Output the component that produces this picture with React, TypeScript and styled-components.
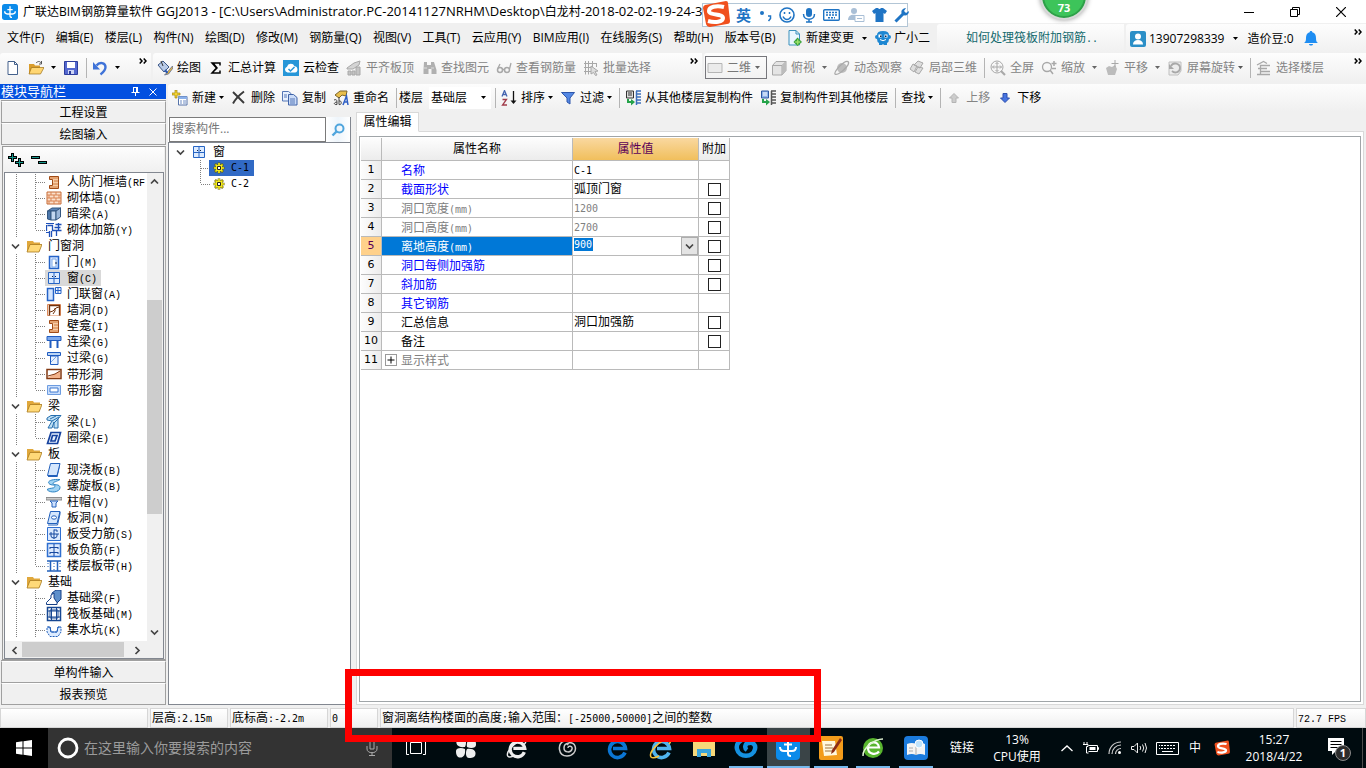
import React from "react";
import styled, { createGlobalStyle, css } from "styled-components";

const ui = `"Open Sans", "Noto Sans CJK SC", sans-serif`;

const Global = createGlobalStyle`
  * { box-sizing: border-box; }
  html, body { margin: 0; height: 100%; }
  body { background: #f0f0f0; color: #000; font: 12px/16px ${ui}; overflow: hidden; }
  button, input, select { font: inherit; color: inherit; margin: 0; padding: 0; border: 0; background: none; border-radius: 0; outline: 0; }
  button { cursor: pointer; white-space: nowrap; }
  svg { display: block; flex: none; }
`;

/* ---------- icons ---------- */

const Svg = ({ w = 16, h = 16, vb, children }: { w?: number; h?: number; vb?: string; children: React.ReactNode }) => (
  <svg width={w} height={h} viewBox={vb ?? `0 0 ${w} ${h}`} fill="none" aria-hidden="true">
    {children}
  </svg>
);

const Arrow = ({ color = "#000" }: { color?: string }) => (
  <Svg w={5} h={3}><path d="M0 0h5L2.500 3z" fill={color} /></Svg>
);

const More = () => (
  <Svg w={8} h={6}><path d="M.7.5 3 3 .7 5.500M4.700.5 7 3 4.700 5.500" stroke="#000" strokeWidth="1.500" /></Svg>
);

const AppMark = ({ size = 16 }: { size?: number }) => (
  <Svg w={size} h={size} vb="0 0 24 24">
    <rect width="24" height="24" rx="4" fill="#0c8bea" />
    <path d="M12 3.500v14q0 2.500 3 2.500M8 8.500h8M4 11q0 4 4 4h8q4 0 4-4" stroke="#fff" strokeWidth="2" />
  </Svg>
);

const g = "#a8a8a8";
const icons: Record<string, React.ReactNode> = {
  file: <><path d="M3 1.500h6.500l3 3v10H3z" fill="#fff" stroke="#44618c" /><path d="M9.500 1.500v3h3" stroke="#44618c" /></>,
  open: <><path d="M1 4h5l1 1.500h5V14H1z" fill="#d99c2b" /><path d="M3.500 7.500H16L12.500 14H1z" fill="#ffd672" stroke="#9c7018" strokeWidth=".7" /><path d="M8 3c2-2 4-2 5 0m.5-2v3H11" stroke="#555" /></>,
  save: <><path d="M1.500 1.500h13v13h-13z" fill="#5468cf" stroke="#2d3d9c" /><path d="M4 2h8v6H4z" fill="#fff" /><path d="M5 10h6v4H5z" fill="#cdd5f5" /><path d="M6 11h2v3H6z" fill="#2d3d9c" /></>,
  undo: <><path d="M4.500 5.500c3-4 9-3 9 1.500 0 3.500-2 5-5 7.500" stroke="#3f73d8" strokeWidth="2.400" /><path d="M1 2v7.500h7z" fill="#3f73d8" /></>,
  paint: <><path d="M1 5l5-4 6 6-5 5z" fill="#b9cbe8" stroke="#3d5887" /><path d="M4 1l2 5" stroke="#333" /><path d="M15.500 6 10 12.500 7.500 15l4-1L16 8z" fill="#e9b83d" stroke="#5b6b95" strokeWidth=".8" /><path d="M8 10l2.500 3" stroke="#2c59b4" strokeWidth="2" /></>,
  sigma: <path d="M12 5.500V3H4l4.500 5L4 13h8v-2.500M5 3l4 5-4.500 4.500" stroke="#000" strokeWidth="1.500" />,
  cloud: <><rect width="16" height="16" fill="#2696d8" /><path d="M4.500 12.500a3 3 0 0 1-.5-5.800 4 4 0 0 1 7.500-.5 3.200 3.200 0 0 1 .5 6.300z" fill="#fff" /><path d="M5.500 9 7.500 11l4-4" stroke="#2696d8" strokeWidth="1.500" /></>,
  level: <><path d="M1 8 8 3l6-2-1 4-6 4H1z" fill="#d4d4d4" stroke={g} /><path d="M2 15v-4h3v4zm4 0v-4h3v4zm4 0V7h4v8z" fill="#c4c4c4" stroke={g} /></>,
  binoc: <><path d="M3 2h3v3h4V2h3l2.500 8v4h-5V9h-3v5h-5v-4z" fill="#b0b0b0" /><path d="M3 8h3m4 0h3" stroke="#ddd" /></>,
  glasses: <><circle cx="4" cy="10" r="2.500" stroke={g} strokeWidth="1.500" /><circle cx="11" cy="10" r="2.500" stroke={g} strokeWidth="1.500" /><path d="M6.500 9.500h2M2 8l2-4M13.500 9l1.500-6" stroke={g} strokeWidth="1.300" /></>,
  batch: <><path d="M2.500 1v13.500M5.500 1v13.500M9.500 1v6M13.500 3v4M1 3.500h13M1 7.500h8M1 11.500h7" stroke={g} /><path d="M8 6l7 5-3 .5 2 3.500-1.500.5-2-3L8 14z" fill="#ddd" stroke={g} /></>,
  rect: <path d="M1 3.500h14v9H1z" fill="#ebebeb" stroke="#b5b5b5" />,
  cube: <><path d="M1.500 5.500 5 1.500h10v9L11 15H1.500z" fill="#e4e4e4" stroke={g} /><path d="M1.500 5.500H11V15M11 5.500l4-4" stroke={g} /><path d="M11 5.500l4-4v9L11 15z" fill="#bcbcbc" /></>,
  orbit: <><circle cx="8" cy="8" r="5" fill="#bdbdbd" /><path d="M1 14c-1-2 4-8 9-11.500 5-3 6 .5 2.500 4.500S3 16 1 14z" stroke="#aaa" strokeWidth="1.300" /></>,
  local: <path d="m1 9 3-5 4 2-3 6zM5 5l4-4 5 2-3 5zM6 12l3-5 5 1-4 6z" fill="#dedede" stroke={g} />,
  full: <><circle cx="7" cy="7" r="6" stroke={g} /><path d="M7 2.500v9M2.500 7h9M5.500 4 7 2.500 8.500 4m-3 6L7 11.500 8.500 10M4 5.500 2.500 7 4 8.500m6-3L11.500 7 10 8.500" stroke={g} /><path d="m11 11 4 4" stroke={g} strokeWidth="2.200" /></>,
  zoom: <><circle cx="6" cy="7" r="4.500" stroke={g} strokeWidth="1.300" /><path d="m9 10 3 4M13 1v5M10.500 3.500h5M11 8.500h4" stroke={g} strokeWidth="1.500" /></>,
  pan: <><path d="M2 8 5 6l3 1 3-2 2 4-2 6H4z" fill="#bcbcbc" /><path d="M11 0v7M7.500 3.500h7" stroke={g} /></>,
  rotate: <><path d="M2 2h12v9l-3 4H2z" fill="#ececec" stroke="#c0c0c0" /><path d="M4 6c2-4 9-3 9 2 0 4-5 6-8 3" stroke={g} strokeWidth="1.800" /><path d="M2 4v5h5z" fill={g} /></>,
  floor: <path d="M1 5 7.500 1.500 11 3.500M4 5.500h10M2 8.500h9M4 11.500h10M1 14.500h13M4.500 5v10" stroke={g} strokeWidth="1.300" />,
  create: <><path d="M6.500 6.500h8.500v8.500H6.500z" fill="#fff" stroke="#5673a9" /><path d="M6.500 6.500h8.500v2.500H6.500z" fill="#8ab0ea" /><path d="M8 11h2m1 0h3m-6 2h2m1 0h3" stroke="#6f8dc5" /><path d="M3 0h2v3h3v2H5v3H3V5H0V3h3z" fill="#f4d432" stroke="#9e8310" strokeWidth=".7" /></>,
  del: <path d="m2 2 11 11M13 1.500C9 4.500 5 8 2 13.500" stroke="#3b3b3b" strokeWidth="1.900" />,
  copy: <><path d="M.5 1.500h6l2.500 2V11H.5z" fill="#e8f1ff" stroke="#5577b6" /><path d="M2 5h3M2 7h3" stroke="#5577b6" /><path d="M6.500 4.500h5l3.500 3v7.500H6.500z" fill="#cbdcf8" stroke="#3f63a8" /><path d="M8 9h5m-5 2h5m-5 2h5" stroke="#5577b6" /></>,
  rename: <><path d="M2 5 7 1h7l-1 5-4-1-3 3z" fill="#e9bf4c" stroke="#7b642c" /><path d="M1 10c3-1 3 0 3 4.500-3 .5-4-2 0-2.500M6 7v7.500c3 1 3-4.500 0-3.500" stroke="#444" /><path d="m10 15 3.500-9L15 15m-4-3h4" stroke="#2f5fc4" strokeWidth="1.500" /></>,
  sort: <><path d="M1 6.500 3.500.5 6 6.500M2 4.500h3" stroke="#4565b0" strokeWidth="1.300" /><path d="M1.500 9.500h4L1.500 15h4.500" stroke="#a13c4b" strokeWidth="1.300" /><path d="M12.500 1v11" stroke="#111" strokeWidth="1.300" /><path d="M9.500 10.500h6l-3 3.500z" fill="#111" /></>,
  filter: <path d="M1.500 2.500h13L10 8v6l-3-2V8z" fill="#5488e4" stroke="#2e56ab" />,
  fromFloor: <><path d="M1.500 1h7v7h-7z" fill="#ddd" stroke="#333" /><path d="M3 3h4M3 5h4" stroke="#333" /><path d="M11 1h5M11 4h5M11 7h5M11 10h5M11 13h5M11.500 1v14" stroke="#3d70bc" strokeWidth="1.500" /><path d="M2 9v4h4v2.500l4-3.500-4-3v2H4V9z" fill="#25a34a" /></>,
  toFloor: <><path d="M1.500 1h7v7h-7z" fill="#8fb3ea" stroke="#2d57a0" /><path d="M3 3h4M3 5h4" stroke="#fff" /><path d="M11 1h5M11 4h5M11 7h5M11 10h5M11 13h5M11.500 1v14" stroke="#555" strokeWidth="1.500" /><path d="M2 9v4h4v2.500l4-3.500-4-3v2H4V9z" fill="#25a34a" /></>,
  up: <path d="m8 3.500 4.500 4.500H10v4.500H6V8H3.500z" fill="#ccc" stroke="#b4b4b4" />,
  down: <path d="M8 12.500 3.500 8H6V3.500h4V8h2.500z" fill="#4774e0" stroke="#2d4fae" />,
  change: <><path d="M2 .500h7L12.500 4v11H2z" fill="#eaf7ff" stroke="#3b91bd" /><path d="M9 .5V4h3.500" stroke="#3b91bd" /><path d="M10.500 7.500 15 12l-4.500 4L6.500 12z" fill="#37a03b" /><path d="M10.700 9.500v5M8.200 12h5" stroke="#9be06b" strokeWidth="1.500" /></>,
  mascot: <><path d="M2 5q0-4 6-4t6 4q2 0 2 2t-2 2q0 3-2 4v2H9l-1-1-1 1H4v-2q-2-1-2-4-2 0-2-2t2-2z" fill="#1d87d2" /><path d="M3.500 4.500h3v3h-3zM9.500 4.500h3v3h-3z" fill="#fff" /><path d="M5 5.500h1.500V7H5zM10 5.500h1.500V7H10z" fill="#124" /><path d="M5 9.500q3 2.500 6 0" stroke="#fff" /></>,
  user: <><rect width="16" height="16" rx="2" fill="#2b8fc7" /><circle cx="8" cy="5.500" r="3" fill="#fff" /><path d="M3 13.500c0-3 2-4.500 5-4.500s5 1.500 5 4.500z" fill="#fff" /></>,
  bell: <path d="M8 0c1 0 1.300.6 1.300 1.300C12 2 13 4 13 7c0 3 .5 4 2 5H1c1.500-1 2-2 2-5 0-3 1-5 3.700-5.700C6.700.6 7 0 8 0zM6 13h4c0 2-4 2-4 0z" fill="#1e8df2" />,
  folder: <><path d="M1 3h6l1 1.500h6V13H1z" fill="#e0a83c" /><path d="M4 6.500h12L13 14H1z" fill="#ffd978" stroke="#a87a1f" strokeWidth=".8" /></>,
  gear: <><path d="M8 2.500v11M2.500 8h11M4 4l8 8M12 4l-8 8" stroke="#6b6600" strokeWidth="2.600" /><path d="M8 3v10M3 8h10M4.500 4.500l7 7M11.500 4.500l-7 7" stroke="#f6ec1b" strokeWidth="1.600" /><circle cx="8" cy="8" r="3.300" fill="#f6ec1b" /><path d="M6.500 6.500h3v3h-3z" fill="#fff" stroke="#222" /></>,
  window: <><path d="M2.500 2.500h11v11h-11z" fill="#dcebff" stroke="#2765c4" /><path d="M8 2v12M2 8.500h12" stroke="#2765c4" /><path d="M6.500 6v1m3-1v1" stroke="#124" /></>,
  lintelWall: <><path d="M3.500 2.500h9v12h-9v-3h3v-6h-3z" fill="#f7cda6" stroke="#a14b16" /><path d="M4 4h8M8 7h4M7 10h5M4 13h8" stroke="#d07a3e" /></>,
  brick: <><path d="M1 2h14v12H1z" fill="#fbe0cc" stroke="#c66a35" /><path d="M1 5h14M1 8h14M1 11h14M5 2v3m5-3v3M3 5v3m5-3v3m5-3v3M5 8v3m5-3v3M3 11v3m5-3v3m5-3v3" stroke="#d98353" /></>,
  hiddenBeam: <><path d="M1.500 5 6 2h9l-4 3z" fill="#5b84b8" stroke="#33567f" /><path d="M1.500 5H5v9l-3.500-1z" fill="#4d78ac" stroke="#33567f" /><path d="M5 5h5v9H5z" fill="#c4d8f0" stroke="#33567f" /><path d="M10 5l4.500-3v9L10 14z" fill="#9bb7d9" stroke="#33567f" /></>,
  masonry: <><path d="M1.500 3.500h5v5h9M.5 3v6M5.500 9v6M9.500 2.500h6M8.500 5.500h6M3.500 9v6M10.500 9v5M12.500 1v8" stroke="#1e50b8" strokeWidth="1.300" /><path d="M0 1.500h8M0 10.500h4" stroke="#1e50b8" /></>,
  door: <><path d="M3.500 2.500h9v12h-9z" fill="#d3e5ff" stroke="#2563c8" strokeWidth="1.500" /><path d="M6 5h4v8H6z" fill="#fff" stroke="#7fa9e8" /><path d="M10 8v2" stroke="#124" /></>,
  doorWindow: <><path d="M1.500 2.500h6v12h-6z" fill="#d3e5ff" stroke="#2563c8" strokeWidth="1.500" /><path d="M9.500 1.500H15v6H9.500zM12 1v6M9 4.500h6" fill="#eef5ff" stroke="#2563c8" /></>,
  hole: <><path d="M1.500 2.500h13v11h-13z" fill="#fce6d6" stroke="#dd8a5a" /><path d="M3.500 13.500v-10h10v10" fill="#fff" stroke="#70330e" strokeWidth="1.300" /><path d="m4 10 3-1 3-3 3-1M9 6v3l-2 3" stroke="#70330e" /></>,
  linkBeam: <><path d="M1 2.500h14v4H1z" fill="#7da9ec" stroke="#205cc0" /><path d="M4.500 7v7m7-7v7" stroke="#205cc0" strokeWidth="2" /></>,
  overBeam: <><path d="M1.500 2.500h13v3h-13z" fill="#bdd6f6" stroke="#205cc0" /><path d="M4.500 6h7.500v8.500H4.500z" fill="#e9f2ff" stroke="#205cc0" /><path d="m5 12 5-5" stroke="#7ca7e5" /></>,
  stripHole: <><path d="M1 3.500h14v9H1z" fill="#fff" stroke="#823811" strokeWidth="1.500" /><path d="M2 11.500 14 5v7H2z" fill="#f2b28a" /><path d="m2 10 7-2 5-3" stroke="#823811" /></>,
  stripWindow: <><path d="M1.500 3.500h13v9h-13z" fill="#c9defc" stroke="#6d9ce0" /><path d="M4 6h8v4H4z" fill="#fff" stroke="#3e79cf" /></>,
  beam: <><path d="M1 4 5 1.500h10L12 5v9H8V8L6 14H2l4-7-5-1z" fill="#bfe0f5" stroke="#266eae" /><path d="m4 5 6-3M6 7l7-4M8 9l4-4" stroke="#266eae" /></>,
  ringBeam: <path d="M5 2.500h9.500l-3 11H1.500zM6.500 5.500h4.500L9 11H5z" fill="#eaf3ff" stroke="#16429e" strokeWidth="1.700" />,
  slab: <><path d="M4.500 1.500H14L11 13.500H1.500z" fill="#d5e7fd" stroke="#2260bb" /><path d="M14 2v2l-2.500 11H2v-1.500h9z" fill="#2260bb" /></>,
  spiral: <path d="M14 1.500C6 1 1 3 3 5.500s7 .5 6 3-5 1-8 3c3 4 13 3 13-2 0-4-7-2-7-4 0-1.500 4-2 7-4z" fill="#9fd3f4" stroke="#2d83c3" />,
  cap: <><path d="M0 3.500h16v2.500H0z" fill="#ccc" stroke="#777" strokeWidth=".8" /><path d="M4 7h8l-2 2v4H6V9z" fill="#cfe2ff" stroke="#2260bb" /></>,
  slabHole: <><path d="M4.500 1.500H14L11 13.500H1.500z" fill="#d5e7fd" stroke="#2260bb" /><path d="M14 2v2l-2.500 11H2" stroke="#2260bb" /><ellipse cx="8" cy="7.500" rx="2.500" ry="1.700" fill="#fff" stroke="#2260bb" /></>,
  forceBar: <><path d="M1.500 1.500h13v13h-13z" fill="#dceaff" stroke="#2f6fd0" /><path d="M3 8h10M8 3.500V13M5 6v4q0 2 3 2M8 4h3v2M11 8v2q0 2-3 2" stroke="#1648a0" /></>,
  negBar: <><path d="M1.500 1.500h13v13h-13z" fill="#dceaff" stroke="#2f6fd0" strokeWidth="1.500" /><path d="M8 2v12M4 5.500h8M4 10.500h8M4 5v2m8-2v2m-8 3v2m8-2v2" stroke="#1648a0" /></>,
  band: <><path d="M1 3h14M1 13h14M4.500 3v10m7-10v10" stroke="#2260bb" strokeWidth="1.500" /><path d="M8 5v1m0 2v1m0 2v1M2 5v1m0 2v1m12-4v1m0 2v1" stroke="#2260bb" /></>,
  footBeam: <><path d="M6 6V3l4-3h5v9l-4 4z" fill="#5d8fcb" stroke="#153f86" /><path d="M.5 14.500v-2L5 8V5l3-2v5l3 4.500v2z" fill="#fff" stroke="#153f86" /></>,
  raft: <><path d="M1.500 1.500h13v13h-13z" fill="#fff" stroke="#174792" strokeWidth="1.500" /><path d="M4 4h8v8H4zM1 5h14M1 11h14M5.500 1v14M10.500 1v14" stroke="#174792" /></>,
  pit: <><path d="M1 5h3l1 5h6l1-5h3v5l-3 4.500H4L1 10z" fill="#dcebff" stroke="#2260bb" strokeDasharray="2 1" /><path d="M2 5h2l1 5h6l1-5h2" stroke="#2260bb" /></>,
};

const Icon = ({ name, size = 16 }: { name: string; size?: number }) => (
  <Svg w={size} h={size} vb="0 0 16 16">{icons[name]}</Svg>
);

/* ---------- mixed text: latin runs take half the width of a Chinese character ---------- */

const Half = styled.span`font-family: "DejaVu Sans Mono", monospace; font-size: 10px;`;
const Serif = styled.span`font-family: "Liberation Mono", monospace; font-size: 10px;`;

const Mix = ({ children, serif }: { children: string; serif?: boolean }) => {
  const Run = serif ? Serif : Half;
  return (
    <span>
      {children.split(/([\x20-\x7e]+)/).map((part, i) => (i % 2 ? <Run key={i}>{part}</Run> : part))}
    </span>
  );
};

/* ---------- shell ---------- */

const Shell = styled.div`position: relative; display: flex; flex-direction: column; height: 100vh; min-height: 480px; overflow: hidden;`;

const TitleBar = styled.header`
  display: flex; align-items: center; height: 23px; flex: none; padding: 0 2px; gap: 5px; background: #fff; white-space: nowrap;
`;
const TitleText = styled.h1`margin: 0; font-size: 12px; font-weight: 400; line-height: 22px; flex: 1; overflow: hidden;`;
const TitlePath = styled.span`font-size: 13px;`;
const Caption = styled.div`display: flex;`;
const CaptionButton = styled.button`display: grid; place-items: center; width: 46px; height: 20px;`;

const ImeBar = styled.div`
  position: absolute; top: 3px; left: 702px; width: 206px; height: 24px; display: flex; align-items: center;
  gap: 7px; padding: 0 4px 0 33px; background: #fff; border: 1px solid #b3c6d6; color: #1f74c4; font: 700 15px/20px "Noto Sans CJK SC", sans-serif;
`;
const ImeLogo = styled.div`position: absolute; left: -1px; top: -4px;`;
const Ball = styled.div`
  position: absolute; top: -28px; right: 278px; width: 48px; height: 48px; border-radius: 50%; border: 2px solid #d8d8d8;
  background: #3dc45a; box-shadow: 0 0 5px #999, inset 0 0 0 2px #2f9f49; color: #fff; font: 700 11px/12px "Open Sans", sans-serif;
  display: flex; align-items: flex-end; justify-content: center; padding-bottom: 4px;
`;

const MenuRow = styled.div`display: flex; height: 30px; flex: none; white-space: nowrap;`;
const Menus = styled.nav`display: flex; align-items: center; justify-content: space-between; flex: 0 0 937px; padding: 0 7px;`;
const MenuButton = styled.button`display: flex; align-items: center; gap: 3px;`;
const MenuTail = styled.span`display: flex; align-items: center; gap: 8px;`;

const strip = css`background: linear-gradient(#fdfdfd, #f0f0f0); border-radius: 3px 0 0 3px;`;
const TipPanel = styled.div`${strip} flex: 1; display: flex; align-items: center; padding-left: 29px; margin: 1px 2px 0 0;`;
const TipLink = styled.a`color: #12696d; text-decoration: none;`;
const AccountPanel = styled.div`${strip} flex: 0 0 240px; display: flex; align-items: center; padding: 0 4px; gap: 9px; margin-top: 1px;`;
const Overflow = styled.button`align-self: flex-start; margin-left: auto; padding: 5px 0;`;

const ToolRow = styled.div`display: flex; height: 31px; flex: none; gap: 2px;`;
const Strip = styled.div<{ $w?: number; $left?: number }>`
  ${strip} display: flex; align-items: center; height: 29px; padding: 0 4px 0 ${(p) => p.$left ?? 0}px; white-space: nowrap;
  flex: ${(p) => (p.$w ? `0 0 ${p.$w}px` : "1")}; min-width: 0;
`;
const ItemStrip = styled.div`${strip} display: flex; align-items: center; height: 27px; flex: none; white-space: nowrap;`;
const ToolButton = styled.button<{ $muted?: boolean }>`
  display: flex; align-items: center; gap: 4px; padding: 0 3px 0 4px; color: ${(p) => (p.$muted ? "#848484" : "#000")};
`;
const Label = styled.span`display: flex; align-items: center; gap: 3px;`;
const Divider = styled.i`width: 1px; height: 20px; background: #b4b4b4; margin: 0 1px 0 4px; flex: none;`;
const ModeBox = styled.button`
  display: flex; align-items: center; gap: 4px; width: 62px; height: 23px; padding-left: 1px; border: 1px solid #77777c; color: #777;
`;
const FloorBox = styled.label`display: flex; align-items: center; gap: 6px; padding-left: 1px;`;
const FloorSelect = styled.select`appearance: none; width: 62px; height: 22px; padding-left: 2px; background: #fff;`;
const SelectWrap = styled.span`display: grid; align-items: center; & > * { grid-area: 1 / 1; } & > svg { justify-self: end; margin-right: 5px; pointer-events: none; }`;

const Tool = ({ icon, text, drop, muted }: { icon?: string; text?: string; drop?: boolean; muted?: boolean }) => (
  <ToolButton $muted={muted} type="button" aria-label={text ?? icon}>
    {icon && <Icon name={icon} />}
    {text && <Label>{text}{drop && <Arrow color={muted ? "#555" : "#000"} />}</Label>}
  </ToolButton>
);
const DropTool = ({ muted }: { muted?: boolean }) => (
  <ToolButton type="button" aria-label="展开"><Arrow color={muted ? "#666" : "#000"} /></ToolButton>
);

/* ---------- left navigation ---------- */

const Body = styled.div`display: flex; flex: 1; min-height: 0;`;
const Nav = styled.aside`display: flex; flex-direction: column; flex: 0 0 167px; padding: 0 1px 3px 0;`;
const NavHead = styled.div`
  display: flex; align-items: center; height: 15px; flex: none; margin-bottom: 2px; padding: 0 4px 0 1px;
  background: #0350e0; color: #fff; font-size: 13px; line-height: 15px;
`;
const HeadButton = styled.button`display: grid; place-items: center; width: 18px; height: 15px;`;
const Grow = styled.span`flex: 1;`;
const NavButton = styled.button`
  height: 22px; flex: none; margin-left: 1px; padding-top: 1px; line-height: 19px; background: #f0f0f0; border: 1px solid #a0a0a0; border-top-color: #fff; box-shadow: 0 -1px #a0a0a0;
`;
const NavBox = styled.section`
  display: flex; flex-direction: column; flex: 1; min-height: 0; margin: 1px 0 1px 2px; padding: 0 1px; border: 1px solid #9a9a9a; border-right-color: #aaa;
`;
const MiniTools = styled.div`height: 25px; flex: none; display: flex; align-items: center; gap: 6px; padding-left: 4px; background: linear-gradient(#fdfdfd, #f0f0f0);`;
const TreeFrame = styled.div`
  display: grid; grid-template: minmax(0, 1fr) 17px / minmax(0, 1fr) 16px; flex: 1; min-height: 0; background: #f0f0f0; border: 1px solid #828790;
`;
const Tree = styled.ul`list-style: none; margin: 0; padding: 1px 0 0; background: #fff; overflow: hidden; min-height: 0;`;
const dotsV = "repeating-linear-gradient(#808080 0 1px, transparent 1px 2px)";
const dotsH = "repeating-linear-gradient(90deg, #808080 0 1px, transparent 1px 2px)";
const Leaf = styled.li<{ $last?: boolean }>`
  display: flex; align-items: center; height: 16px; padding-left: 40px; white-space: nowrap;
  background: ${dotsV} 11px 0 / 1px 16px no-repeat, ${dotsV} 30px 0 / 1px ${(p) => (p.$last ? 8 : 16)}px no-repeat, ${dotsH} 31px 8px / 10px 1px no-repeat;
`;
const LeafBody = styled.span<{ $on?: boolean }>`
  display: flex; align-items: center; gap: 5px; height: 16px; padding: 0 4px 0 1px; line-height: 18px; background: ${(p) => (p.$on ? "#d9d9d9" : "transparent")};
  & > span { padding-top: 1px; }
`;
const Group = styled.li`
  display: flex; align-items: center; height: 16px; padding-left: 6px; gap: 6px; white-space: nowrap;
`;
const VScroll = styled.div`display: flex; flex-direction: column; align-items: stretch; justify-content: space-between; padding-right: 1px;`;
const VTrack = styled.div`flex: 1; display: flex; flex-direction: column;`;
const Thumb = styled.div<{ $grow: number }>`flex: ${(p) => p.$grow}; background: #cdcdcd;`;
const Blank = styled.div<{ $grow: number }>`flex: ${(p) => p.$grow};`;
const ScrollButton = styled.button`display: grid; place-items: center; width: 15px; height: 17px;`;
const HScroll = styled.div`display: flex; padding: 1px 2px;`;

const Chevron = ({ dir }: { dir: "up" | "down" | "left" | "right" }) => (
  <Svg w={9} h={9}>
    <path
      d={{ up: "M1 6.500 4.500 3 8 6.500", down: "M1 2.500 4.500 6 8 2.500", left: "M6.500 1 3 4.500 6.500 8", right: "M2.500 1 6 4.500 2.500 8" }[dir]}
      stroke="#444" strokeWidth="1.700"
    />
  </Svg>
);

type Node = { group?: string; icon?: string; text?: string; on?: boolean; last?: boolean };
const nodes: Node[] = [
  { icon: "lintelWall", text: "人防门框墙(RF" },
  { icon: "brick", text: "砌体墙(Q)" },
  { icon: "hiddenBeam", text: "暗梁(A)" },
  { icon: "masonry", text: "砌体加筋(Y)", last: true },
  { group: "门窗洞" },
  { icon: "door", text: "门(M)" },
  { icon: "window", text: "窗(C)", on: true },
  { icon: "doorWindow", text: "门联窗(A)" },
  { icon: "hole", text: "墙洞(D)" },
  { icon: "lintelWall", text: "壁龛(I)" },
  { icon: "linkBeam", text: "连梁(G)" },
  { icon: "overBeam", text: "过梁(G)" },
  { icon: "stripHole", text: "带形洞" },
  { icon: "stripWindow", text: "带形窗", last: true },
  { group: "梁" },
  { icon: "beam", text: "梁(L)" },
  { icon: "ringBeam", text: "圈梁(E)", last: true },
  { group: "板" },
  { icon: "slab", text: "现浇板(B)" },
  { icon: "spiral", text: "螺旋板(B)" },
  { icon: "cap", text: "柱帽(V)" },
  { icon: "slabHole", text: "板洞(N)" },
  { icon: "forceBar", text: "板受力筋(S)" },
  { icon: "negBar", text: "板负筋(F)" },
  { icon: "band", text: "楼层板带(H)", last: true },
  { group: "基础" },
  { icon: "footBeam", text: "基础梁(F)" },
  { icon: "raft", text: "筏板基础(M)" },
  { icon: "pit", text: "集水坑(K)" },
];

/* ---------- component list ---------- */

const Right = styled.div`display: flex; flex-direction: column; flex: 1; min-width: 0; padding-left: 1px;`;
const Work = styled.div`display: flex; flex: 1; min-height: 0;`;
const ListPane = styled.section`display: flex; flex-direction: column; flex: 0 0 183px; margin: 6px 0 3px; border-right: 1px solid #828790;`;
const SearchRow = styled.form`display: flex; height: 25px; flex: none; padding-left: 1px; background: #fff;`;
const SearchInput = styled.input`
  width: 157px; height: 25px; padding: 0 2px 3px; background: #fff; border: 1px solid #7a7a7a;
  &::placeholder { color: #767676; opacity: 1; }
`;
const SearchButton = styled.button`display: grid; place-items: center; flex: 1; background: linear-gradient(90deg, #fff, #eef5fb, #fff);`;
const ListTree = styled.ul`list-style: none; flex: 1; margin: 0; padding: 1px 0; background: #fff; border: 1px solid #828790; border-right: 0;`;
const Root = styled.li`display: flex; align-items: center; gap: 6px; height: 16px; padding-left: 7px;`;
const Item = styled.li<{ $last?: boolean }>`
  display: flex; height: 16px; padding-left: 40px;
  background: ${dotsV} 31px 0 / 1px ${(p) => (p.$last ? 8 : 16)}px no-repeat, ${dotsH} 32px 8px / 9px 1px no-repeat;
`;
const ItemBody = styled.span<{ $on?: boolean }>`
  display: flex; align-items: center; gap: 4px; padding: 0 5px 0 2px; background: ${(p) => (p.$on ? "#316ac5" : "transparent")};
`;

/* ---------- property editor ---------- */

const Editor = styled.section`display: flex; flex-direction: column; flex: 1; min-width: 0; margin: 1px 2px 3px 5px;`;
const Tabs = styled.div`display: flex; height: 20px; flex: none; border-bottom: 1px solid #d9d9d9;`;
const Tab = styled.button`
  width: 63px; height: 20px; background: #fff; border: 1px solid #d9d9d9; border-bottom-color: #fff; line-height: 18px;
`;
const Pane = styled.div`flex: 1; min-height: 0; padding: 4px 2px 2px; background: #fff; border: 1px solid #d9d9d9; border-top: 0;`;
const GridFrame = styled.div`height: 100%; padding: 1px; border: 1px solid #a0a5a8;`;
const Grid = styled.table`table-layout: fixed; width: 369px; border-collapse: separate; border-spacing: 0;`;
const cell = css`padding: 0; border: solid #bababa; border-width: 0 1px 1px 0; font-weight: 400; text-align: center; overflow: hidden; white-space: nowrap;`;
const HeadCell = styled.th<{ $on?: boolean }>`
  ${cell} height: 23px; background: ${(p) => (p.$on ? "linear-gradient(#f9d8a0, #f1bf5c)" : "linear-gradient(#fdfdfd, #ececec)")};
  color: ${(p) => (p.$on ? "#5a0058" : "#000")};
`;
const NoCell = styled.th<{ $on?: boolean }>`
  ${cell} height: 19px; font: 11px/16px "DejaVu Sans", sans-serif; background: ${(p) => (p.$on ? "#ffd18b" : "linear-gradient(90deg, #fdfdfd, #ececec)")}; color: ${(p) => (p.$on ? "#5a0058" : "#000")};
`;
const NameCell = styled.td<{ $on?: boolean; $color: string }>`
  ${cell} text-align: left; background: ${(p) => (p.$on ? "#0078d7" : "#fff")}; color: ${(p) => p.$color};
`;
const NameLine = styled.span`display: flex; align-items: center; height: 18px; line-height: 16px; & > span:last-child { padding-top: 2px; }`;
const Slot = styled.span`display: grid; place-items: center; width: 19px; height: 18px;`;
const Plus = styled.button`display: grid; place-items: center; width: 12px; height: 12px; border: 1px solid #9a9a9a; background: #fff; margin-right: 1px;`;
const ValueCell = styled.td<{ $muted?: boolean }>`${cell} text-align: left; padding-left: 1px; line-height: 16px; color: ${(p) => (p.$muted ? "#808080" : "#000")};`;
const CheckCell = styled.td`${cell}`;
const Check = styled.input`appearance: none; display: block; width: 13px; height: 13px; margin: 1px auto 0; border: 1px solid #222; background: #fff;`;
const Combo = styled.span`display: flex; justify-content: space-between; height: 18px;`;
const ValueInput = styled.input`width: 19px; height: 13px; margin-top: 1px; background: #0078d7; color: #fff; font: 10px/13px "DejaVu Sans Mono", monospace;`;
const ComboButton = styled.button`display: grid; place-items: center; width: 17px; height: 18px; border: 1px solid #adadad; background: #e4e4e4;`;

type Row = { name: string; value?: string; kind: "blue" | "gray" | "black"; check?: boolean; active?: boolean; plus?: boolean };
const rows: Row[] = [
  { name: "名称", value: "C-1", kind: "blue" },
  { name: "截面形状", value: "弧顶门窗", kind: "blue", check: true },
  { name: "洞口宽度(mm)", value: "1200", kind: "gray", check: true },
  { name: "洞口高度(mm)", value: "2700", kind: "gray", check: true },
  { name: "离地高度(mm)", value: "900", kind: "blue", check: true, active: true },
  { name: "洞口每侧加强筋", kind: "blue", check: true },
  { name: "斜加筋", kind: "blue", check: true },
  { name: "其它钢筋", kind: "blue" },
  { name: "汇总信息", value: "洞口加强筋", kind: "black", check: true },
  { name: "备注", kind: "black", check: true },
  { name: "显示样式", kind: "gray", plus: true },
];
const nameColor = { blue: "#0000ff", gray: "#808080", black: "#000" };

/* ---------- status and taskbar ---------- */

const Status = styled.footer`display: flex; height: 20px; flex: none; gap: 2px; white-space: nowrap;`;
const StatusCell = styled.div<{ $w?: number }>`
  flex: ${(p) => (p.$w ? `0 0 ${p.$w}px` : "1")}; height: 20px; padding-left: 1px; border: 1px solid #d6d6d6; background: linear-gradient(#fff, #f0f0f0); line-height: 18px;
`;
const Taskbar = styled.div`display: flex; height: 40px; flex: none; background: #000b0f; color: #fff; white-space: nowrap;`;
const Start = styled.button`display: grid; place-items: center; width: 48px; background: #000;`;
const TaskSearch = styled.label`display: flex; align-items: center; flex: 0 0 344px; gap: 5px; padding: 0 13px 0 9px; background: #333;`;
const TaskInput = styled.input`flex: 1; min-width: 0; font-size: 14px; line-height: 20px; &::placeholder { color: #9b9b9b; opacity: 1; }`;
const Pinned = styled.div`display: grid; grid-template-columns: 48px 51px 51px 51px 47px;`;
const Running = styled.div`display: flex; flex: 0 0 297px;`;
const TaskButton = styled.button<{ $open?: boolean; $active?: boolean }>`
  flex: 1; display: grid; place-items: center; background: ${(p) => (p.$active ? "#3a4447" : "none")};
  ${(p) => p.$open && css`
    background-image: linear-gradient(#76b9ed, #76b9ed); background-repeat: no-repeat; background-position: 50% 100%; background-size: ${p.$active ? "100%" : "34px"} 2px;
  `}
`;
const Tray = styled.div`display: flex; align-items: center; margin-left: auto; gap: 9px;`;
const TrayText = styled.span`margin-right: 10px;`;
const TwoLine = styled.span<{ $w: number }>`display: block; width: ${(p) => p.$w}px; text-align: center; line-height: 17px;`;
const CpuMeter = styled(TwoLine)`margin-right: 10px;`;
const TrayButton = styled.button<{ $w: number }>`display: grid; place-items: center; width: ${(p) => p.$w}px; height: 40px;`;
const Notices = styled.button`display: grid; place-items: center; width: 48px; height: 40px; border-right: 1px solid #4c4c4c; margin-right: 3px;`;

const RedFrame = styled.div`position: absolute; left: 345px; bottom: 26px; width: 476px; height: 73px; border: 7px solid #fe0000; pointer-events: none;`;

const Edge = ({ a, b, size = 24 }: { a: string; b?: string; size?: number }) => (
  <Svg w={size} h={size} vb="0 0 24 24">
    <path d="M20 16.500A8 8 0 1 1 20.500 12.500H8" stroke={a} strokeWidth="3.600" />
    {b && <path d="M2 21C-1 16 12 3 20 3c3 1 1 4 0 5M2 21c2 2 6 0 8-1" stroke={b} strokeWidth="1.500" />}
  </Svg>
);

const menus = ["文件(F)", "编辑(E)", "楼层(L)", "构件(N)", "绘图(D)", "修改(M)", "钢筋量(Q)", "视图(V)", "工具(T)", "云应用(Y)", "BIM应用(I)", "在线服务(S)", "帮助(H)", "版本号(B)"];

const SogouMark = ({ size }: { size: number }) => (
  <Svg w={size} h={size} vb="0 0 28 28">
    <path d="M3 5 24 1q2 0 2 2l2 18q0 3-3 3L8 27q-3 0-4-3L1 8q0-2 2-3z" fill="#f0501e" />
    <path d="M22 7C14 5 7 7 7 11c0 5 14 2 14 7 0 4-8 5-15 3" stroke="#fff" strokeWidth="4" />
  </Svg>
);

export default function App() {
  return (
    <>
      <Global />
      <Shell>
        <TitleBar>
          <AppMark />
          <TitleText>广联达BIM钢筋算量软件 <TitlePath>GGJ2013 - [C:\Users\Administrator.PC-20141127NRHM\Desktop\</TitlePath>白龙村<TitlePath>-2018-02-02-19-24-35</TitlePath></TitleText>
          <Caption>
            <CaptionButton aria-label="最小化"><Svg w={10} h={10}><path d="M0 5.500h10" stroke="#000" /></Svg></CaptionButton>
            <CaptionButton aria-label="还原"><Svg w={10} h={10}><path d="M.5 2.500h7v7h-7zM2.500 2.500v-2h7v7h-2" stroke="#000" /></Svg></CaptionButton>
            <CaptionButton aria-label="关闭"><Svg w={10} h={10}><path d="m0 0 10 10M10 0 0 10" stroke="#000" strokeWidth="1.200" /></Svg></CaptionButton>
          </Caption>
        </TitleBar>

        <MenuRow>
          <Menus>
            {menus.map((m) => <MenuButton key={m} type="button">{m}</MenuButton>)}
            <MenuTail>
              <MenuButton type="button"><Icon name="change" />新建变更</MenuButton>
              <Arrow />
              <MenuButton type="button"><Icon name="mascot" />广小二</MenuButton>
            </MenuTail>
          </Menus>
          <TipPanel><TipLink href="#tip"><Mix>如何处理筏板附加钢筋..</Mix></TipLink></TipPanel>
          <AccountPanel>
            <MenuButton type="button"><Icon name="user" />13907298339</MenuButton>
            <Arrow />
            <span>造价豆:0</span>
            <Icon name="bell" />
            <Overflow aria-label="更多"><More /></Overflow>
          </AccountPanel>
        </MenuRow>

        <ToolRow>
          <Strip $w={151} $left={1}>
            <Tool icon="file" /><Tool icon="open" /><DropTool /><Tool icon="save" /><Divider />
            <Tool icon="undo" /><DropTool />
            <Overflow aria-label="更多"><More /></Overflow>
          </Strip>
          <Strip $w={549}>
            <Tool icon="paint" text="绘图" />
            <Tool icon="sigma" text="汇总计算" />
            <Tool icon="cloud" text="云检查" />
            <Tool icon="level" text="平齐板顶" muted />
            <Tool icon="binoc" text="查找图元" muted />
            <Tool icon="glasses" text="查看钢筋量" muted />
            <Tool icon="batch" text="批量选择" muted />
            <Overflow aria-label="更多"><More /></Overflow>
          </Strip>
          <Strip $left={1}>
            <ModeBox type="button"><Icon name="rect" /><Label>二维</Label><Arrow color="#666" /></ModeBox>
            <Tool icon="cube" text="俯视" muted /><DropTool muted />
            <Tool icon="orbit" text="动态观察" muted />
            <Tool icon="local" text="局部三维" muted />
            <Divider />
            <Tool icon="full" text="全屏" muted />
            <Tool icon="zoom" text="缩放" muted /><DropTool muted />
            <Tool icon="pan" text="平移" muted /><DropTool muted />
            <Tool icon="rotate" text="屏幕旋转" muted drop />
            <Divider />
            <Tool icon="floor" text="选择楼层" muted />
            <Overflow aria-label="更多"><More /></Overflow>
          </Strip>
        </ToolRow>

        <Body>
          <Nav>
            <NavHead>
              模块导航栏<Grow />
              <HeadButton aria-label="固定"><Svg w={9} h={9}><path d="M2.500 0v5M6.500 0v5M2 .5h5M.5 5.500h8M4.500 5.500V9M5.500 0v5" stroke="#fff" /></Svg></HeadButton>
              <HeadButton aria-label="关闭"><Svg w={8} h={8}><path d="m.5.5 7 7m0-7-7 7" stroke="#fff" /></Svg></HeadButton>
            </NavHead>
            <NavButton>工程设置</NavButton>
            <NavButton>绘图输入</NavButton>
            <NavBox>
              <MiniTools>
                <Svg w={17} h={14}><path d="M4.500 0v9M0 4.500h9M11.500 5v9M7 9.500h9" stroke="#000" strokeWidth="3" /><path d="M4.500 1v7M1 4.500h7M11.500 6v7M8 9.500h7" stroke="#15968b" /></Svg>
                <Svg w={17} h={14}><path d="M0 4.500h9M7 9.500h9" stroke="#000" strokeWidth="3" /><path d="M1 4.500h7M8 9.500h7" stroke="#15968b" /></Svg>
              </MiniTools>
              <TreeFrame>
                <Tree>
                  {nodes.map((n, i) =>
                    n.group ? (
                      <Group key={i}><Chevron dir="down" /><Icon name="folder" /><span>{n.group}</span></Group>
                    ) : (
                      <Leaf key={i} $last={n.last}>
                        <LeafBody $on={n.on}><Icon name={n.icon!} /><Mix serif>{n.text!}</Mix></LeafBody>
                      </Leaf>
                    )
                  )}
                </Tree>
                <VScroll>
                  <ScrollButton aria-label="向上"><Chevron dir="up" /></ScrollButton>
                  <VTrack><Blank $grow={110} /><Thumb $grow={213} /><Blank $grow={110} /></VTrack>
                  <ScrollButton aria-label="向下"><Chevron dir="down" /></ScrollButton>
                </VScroll>
                <HScroll>
                  <ScrollButton aria-label="向左"><Chevron dir="left" /></ScrollButton>
                  <Thumb $grow={102} /><Blank $grow={6} />
                  <ScrollButton aria-label="向右"><Chevron dir="right" /></ScrollButton>
                </HScroll>
              </TreeFrame>
            </NavBox>
            <NavButton>单构件输入</NavButton>
            <NavButton>报表预览</NavButton>
          </Nav>

          <Right>
            <ItemStrip>
              <Tool icon="create" text="新建" drop />
              <Tool icon="del" text="删除" />
              <Tool icon="copy" text="复制" />
              <Tool icon="rename" text="重命名" />
              <Divider />
              <FloorBox>
                楼层
                <SelectWrap>
                  <FloorSelect defaultValue="基础层"><option>基础层</option></FloorSelect>
                  <Arrow />
                </SelectWrap>
              </FloorBox>
              <Divider />
              <Tool icon="sort" text="排序" drop />
              <Tool icon="filter" text="过滤" drop />
              <Divider />
              <Tool icon="fromFloor" text="从其他楼层复制构件" />
              <Tool icon="toFloor" text="复制构件到其他楼层" />
              <Divider />
              <Tool text="查找" drop />
              <Divider />
              <Tool icon="up" text="上移" muted />
              <Tool icon="down" text="下移" />
            </ItemStrip>
            <Work>
              <ListPane>
                <SearchRow>
                  <SearchInput placeholder="搜索构件..." aria-label="搜索构件" />
                  <SearchButton type="button" aria-label="搜索">
                    <Svg w={14} h={14}><circle cx="8.500" cy="5.500" r="4" stroke="#4fa5dd" strokeWidth="2" /><path d="m5.500 8.500-4 4" stroke="#4fa5dd" strokeWidth="2.400" /></Svg>
                  </SearchButton>
                </SearchRow>
                <ListTree>
                  <Root><Chevron dir="down" /><Icon name="window" /><span>窗</span></Root>
                  <Item><ItemBody $on><Icon name="gear" /><Half>C-1</Half></ItemBody></Item>
                  <Item $last><ItemBody><Icon name="gear" /><Half>C-2</Half></ItemBody></Item>
                </ListTree>
              </ListPane>

              <Editor>
                <Tabs><Tab type="button">属性编辑</Tab></Tabs>
                <Pane>
                  <GridFrame>
                    <Grid>
                      <colgroup><col width="21" /><col width="191" /><col width="126" /><col width="31" /></colgroup>
                      <thead>
                        <tr><HeadCell /><HeadCell>属性名称</HeadCell><HeadCell $on>属性值</HeadCell><HeadCell>附加</HeadCell></tr>
                      </thead>
                      <tbody>
                        {rows.map((r, i) => (
                          <tr key={r.name}>
                            <NoCell $on={r.active}>{i + 1}</NoCell>
                            <NameCell $on={r.active} $color={r.active ? "#fff" : nameColor[r.kind]}>
                              <NameLine>
                                <Slot>{r.plus && <Plus aria-label="展开"><Svg w={8} h={8}><path d="M4 .5v7M.5 4h7" stroke="#000" /></Svg></Plus>}</Slot>
                                <Mix>{r.name}</Mix>
                              </NameLine>
                            </NameCell>
                            <ValueCell $muted={r.kind === "gray"}>
                              {r.active ? (
                                <Combo>
                                  <ValueInput defaultValue={r.value} aria-label={r.name} />
                                  <ComboButton aria-label="选择"><Chevron dir="down" /></ComboButton>
                                </Combo>
                              ) : r.value && <Mix>{r.value}</Mix>}
                            </ValueCell>
                            <CheckCell>{r.check && <Check type="checkbox" aria-label={`附加 ${r.name}`} />}</CheckCell>
                          </tr>
                        ))}
                      </tbody>
                    </Grid>
                  </GridFrame>
                </Pane>
              </Editor>
            </Work>
          </Right>
        </Body>

        <Status>
          <StatusCell $w={148} />
          <StatusCell $w={78}><Mix>层高:2.15m</Mix></StatusCell>
          <StatusCell $w={98}><Mix>底标高:-2.2m</Mix></StatusCell>
          <StatusCell $w={48}><Mix>0</Mix></StatusCell>
          <StatusCell><Mix>窗洞离结构楼面的高度;输入范围：[-25000,50000]之间的整数</Mix></StatusCell>
          <StatusCell $w={70}><Mix serif>72.7 FPS</Mix></StatusCell>
        </Status>

        <Taskbar>
          <Start aria-label="开始"><Svg w={16} h={16}><path d="M0 2.300 6.500 1.300V7.500H0zM7.500 1.200 16 0v7.500H7.500zM0 8.500h6.500v6.200L0 13.700zM7.500 8.500H16V16l-8.500-1.200z" fill="#fff" /></Svg></Start>
          <TaskSearch>
            <Svg w={22} h={22}><circle cx="11" cy="11" r="9" stroke="#fff" strokeWidth="2.800" /></Svg>
            <TaskInput placeholder="在这里输入你要搜索的内容" />
            <Svg w={14} h={16}><path d="M5 1h4v8H5zM2 6v3c0 5 10 5 10 0V6M7 12v3M4 15.500h6" stroke="#aaa" /></Svg>
          </TaskSearch>
          <Pinned>
            <TaskButton aria-label="任务视图"><Svg w={20} h={16}><path d="M4.500 2.500h11v11h-11zM3 .5H.5v14H3M17 .5h2.500v14H17" stroke="#fff" /></Svg></TaskButton>
            <TaskButton aria-label="浏览器"><Svg w={22} h={22}><path d="M10 10C3 11 0 7 2 3c2-2 4-2 6-2 3 0 4 5 2 9zM12 10C11 3 15 0 19 2c2 2 2 4 2 6 0 3-5 4-9 2zM12 12C19 11 22 15 20 19c-2 2-4 2-6 2-3 0-4-5-2-9zM10 12C11 19 7 22 3 20c-2-2-2-4-2-6 0-3 5-4 9-2z" fill="#eee" /></Svg></TaskButton>
            <TaskButton aria-label="IE"><Edge a="#eee" b="#eee" size={22} /></TaskButton>
            <TaskButton aria-label="漩涡"><Svg w={20} h={20}><path d="M10 10c0-3 5-2 4 1-1 4-8 4-8-1 0-6 9-7 11-2 2 6-3 10-8 10-9 0-10-12-3-15M9 7c2-3 7-5 9-5" stroke="#ccc" strokeWidth="1.500" /></Svg></TaskButton>
            <TaskButton aria-label="Edge"><Edge a="#0b76d4" size={24} /></TaskButton>
          </Pinned>
          <Running>
            <TaskButton aria-label="Internet Explorer"><Edge a="#50b4ee" b="#f6c33a" size={24} /></TaskButton>
            <TaskButton aria-label="文件资源管理器"><Svg w={22} h={20}><path d="M0 1h9l2 3h11v14H0z" fill="#f6d87a" /><path d="M4 19v-8h14v8h-4v-4H8v4z" fill="#39a5dc" /></Svg></TaskButton>
            <TaskButton $open aria-label="广联达"><Svg w={24} h={24}><path d="M10 3C4 5 2 9 3 13c2 9 16 9 18 0 1-4-2-7-6-6-4 0-5 5-2 7" stroke="#1591e0" strokeWidth="4.500" /></Svg></TaskButton>
            <TaskButton $open $active aria-label="钢筋算量"><AppMark size={24} /></TaskButton>
            <TaskButton $open aria-label="写字板"><Svg w={24} h={24}><rect width="24" height="24" rx="2" fill="#f39c1b" /><path d="M3 5h13l2 14-13 1z" fill="#fff8df" /><path d="M6 9h7m-7 3h8m-8 3h8" stroke="#9e7340" /><path d="m21 2-8 12-1 4 3-2 8-12z" fill="#8e2d15" /></Svg></TaskButton>
            <TaskButton $open aria-label="360浏览器"><Svg w={24} h={24}><circle cx="12" cy="12" r="10" fill="#58b52e" /><path d="M18 15.500c-3 4-11 3-11-3.500S17 4 18 11.500H8" stroke="#fff" strokeWidth="2.200" /><path d="M2 20C1 13 13 3 22 3" stroke="#dff3d3" strokeWidth="1.500" /></Svg></TaskButton>
            <TaskButton $open aria-label="图库"><Svg w={24} h={24}><rect width="24" height="24" rx="4" fill="#1b7bdd" /><path d="M3 8q5-2 9 0 4-2 9 0v11q-5-2-9 0-4-2-9 0z" fill="#f4f4f4" /><path d="M12 8v11M5 12h4m-4 3h4" stroke="#aaa" /><circle cx="15" cy="8" r="4" fill="#bfe2fb" stroke="#fff" /></Svg></TaskButton>
          </Running>
          <Tray>
            <TrayText>链接</TrayText>
            <CpuMeter $w={48}>13%<br />CPU使用</CpuMeter>
            <TrayButton $w={14} aria-label="显示隐藏的图标"><Svg w={12} h={7}><path d="m.5 6 5.500-5 5.500 5" stroke="#fff" strokeWidth="1.300" /></Svg></TrayButton>
            <TrayButton $w={16} aria-label="电源"><Svg w={16} h={12}><path d="M5.500 3.500h9v6h-9M14 5.500h1.500v2H14M1 0v2m3-2v2M0 2.500h5v2H3.500V11h2" stroke="#fff" /><path d="M6.500 5h6v3h-6z" fill="#fff" /></Svg></TrayButton>
            <TrayButton $w={14} aria-label="网络"><Svg w={14} h={14}><path d="M1 13C1 6 6 1 13 1M4 13c0-5 4-9 9-9M7.500 13c0-3 2.500-5.500 5.500-5.500" stroke="#ccc" strokeWidth="1.200" /><circle cx="11.500" cy="11.500" r="1.500" fill="#fff" /></Svg></TrayButton>
            <TrayButton $w={16} aria-label="音量"><Svg w={16} h={12}><path d="M.5 4.500H3L6.500 1v10L3 7.500H.5zM9 4q1.500 2 0 4M11.500 2.500q2.500 3.500 0 7M14 1q3 5 0 10" stroke="#eee" /></Svg></TrayButton>
            <TrayButton $w={23} aria-label="触摸键盘"><Svg w={23} h={13}><path d="M.5.5h22v12H.5zM3 3.500h17M3 6.500h17M6 9.500h11" stroke="#fff" /><path d="M4.500 2v9m3-9v6m3-6v6m3-6v6m3-6v6m3-6v9" stroke="#000b0f" /></Svg></TrayButton>
            <TrayButton $w={14} aria-label="输入法">中</TrayButton>
            <TrayButton $w={22} aria-label="搜狗"><SogouMark size={16} /></TrayButton>
            <TwoLine $w={64}>15:27<br />2018/4/22</TwoLine>
            <Notices aria-label="通知">
              <Svg w={26} h={26}><path d="M2 3h16v13H10l-4 4v-4H2z" fill="#fff" /><path d="M4.500 6.500h11m-11 3h11m-11 3h7" stroke="#000" /><circle cx="17" cy="18" r="7.500" fill="#2c2c2c" stroke="#8a8a8a" /><text x="17" y="22" textAnchor="middle" fill="#fff" fontSize="11" fontWeight="700" fontFamily="Open Sans, sans-serif">1</text></Svg>
            </Notices>
          </Tray>
        </Taskbar>

        <ImeBar>
          <ImeLogo><SogouMark size={28} /></ImeLogo>
          <span>英</span>
          <Svg w={14} h={14}><circle cx="4" cy="5" r="2" fill="#1f74c4" /><path d="M10 8h2.500v2.500L10.500 13" stroke="#1f74c4" strokeWidth="1.500" /></Svg>
          <Svg><circle cx="8" cy="8" r="7" stroke="#1f74c4" strokeWidth="1.600" /><path d="M5.500 5v2m5-2v2M4 9.500c2 4 6 4 8 0" stroke="#1f74c4" strokeWidth="1.500" /></Svg>
          <Svg w={14} h={16}><rect x="4" y="1" width="6" height="9" rx="3" fill="#1f74c4" /><path d="M1.500 7c0 7 11 7 11 0M7 12v3M4 15h6" stroke="#1f74c4" strokeWidth="1.500" /></Svg>
          <Svg w={17} h={14}><rect x=".7" y="1.700" width="15.600" height="10.600" rx="1" stroke="#1f74c4" strokeWidth="1.400" /><path d="M3 4.500h11M3 7h11M5 9.700h7" stroke="#1f74c4" strokeWidth="1.400" strokeDasharray="2 1" /></Svg>
          <Svg w={18}><circle cx="7" cy="4" r="3" fill="#a9bfd6" /><path d="M1 13c0-5 4-6 8-5v5z" fill="#a9bfd6" /><path d="M8 8.500h9v6H8zM10 11.500h5" fill="#fff" stroke="#a9bfd6" /></Svg>
          <Svg w={15} h={14}><path d="M4 0h2q1.500 2 3 0h2l4 3-2 3-1.500-1V14h-8V5L2 6 0 3z" fill="#1f74c4" /></Svg>
          <Svg><path d="M1.500 14.500 9 7" stroke="#1f74c4" strokeWidth="3" /><path d="M12 1C8 1 6 5 8.500 7.500S15 8 15 4l-3 2-2-2z" fill="#1f74c4" /></Svg>
        </ImeBar>
        <Ball>73</Ball>
        <RedFrame />
      </Shell>
    </>
  );
}
